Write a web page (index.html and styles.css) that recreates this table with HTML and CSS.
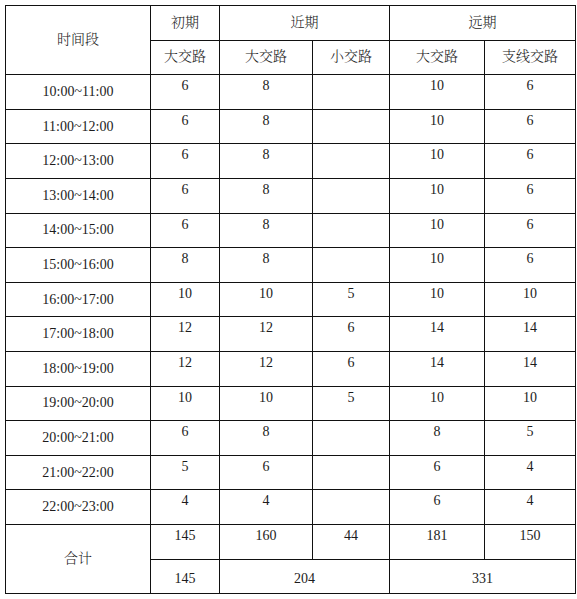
FILE: index.html
```html
<!DOCTYPE html>
<html lang="zh">
<head>
<meta charset="utf-8">
<link rel="stylesheet" href="styles.css">
</head>
<body>
<table class="plan">
  <colgroup>
    <col class="c-time"><col class="c-a"><col class="c-b"><col class="c-c"><col class="c-d"><col class="c-e">
  </colgroup>
  <tr class="head">
    <td rowspan="2" class="label">时间段</td>
    <td>初期</td>
    <td colspan="2">近期</td>
    <td colspan="2">远期</td>
  </tr>
  <tr class="head">
    <td>大交路</td><td>大交路</td><td>小交路</td><td>大交路</td><td>支线交路</td>
  </tr>
  <tr><td class="label">10:00~11:00</td><td>6</td><td>8</td><td></td><td>10</td><td>6</td></tr>
  <tr><td class="label">11:00~12:00</td><td>6</td><td>8</td><td></td><td>10</td><td>6</td></tr>
  <tr><td class="label">12:00~13:00</td><td>6</td><td>8</td><td></td><td>10</td><td>6</td></tr>
  <tr><td class="label">13:00~14:00</td><td>6</td><td>8</td><td></td><td>10</td><td>6</td></tr>
  <tr><td class="label">14:00~15:00</td><td>6</td><td>8</td><td></td><td>10</td><td>6</td></tr>
  <tr><td class="label">15:00~16:00</td><td>8</td><td>8</td><td></td><td>10</td><td>6</td></tr>
  <tr><td class="label">16:00~17:00</td><td>10</td><td>10</td><td>5</td><td>10</td><td>10</td></tr>
  <tr><td class="label">17:00~18:00</td><td>12</td><td>12</td><td>6</td><td>14</td><td>14</td></tr>
  <tr><td class="label">18:00~19:00</td><td>12</td><td>12</td><td>6</td><td>14</td><td>14</td></tr>
  <tr><td class="label">19:00~20:00</td><td>10</td><td>10</td><td>5</td><td>10</td><td>10</td></tr>
  <tr><td class="label">20:00~21:00</td><td>6</td><td>8</td><td></td><td>8</td><td>5</td></tr>
  <tr><td class="label">21:00~22:00</td><td>5</td><td>6</td><td></td><td>6</td><td>4</td></tr>
  <tr><td class="label">22:00~23:00</td><td>4</td><td>4</td><td></td><td>6</td><td>4</td></tr>
  <tr><td rowspan="2" class="label">合计</td><td>145</td><td>160</td><td>44</td><td>181</td><td>150</td></tr>
  <tr class="sum"><td>145</td><td colspan="2">204</td><td colspan="2">331</td></tr>
</table>
</body>
</html>
```
FILE: styles.css
```css
html, body {
  margin: 0;
  padding: 0;
  background: #fff;
}
body {
  padding: 5px 0 0 5px;
}
.plan {
  border-collapse: collapse;
  table-layout: fixed;
  width: 570px;
  font-family: "Liberation Serif", "Noto Serif CJK SC", "Noto Sans CJK SC", serif;
  font-size: 14px;
  font-weight: 300;
  color: #1c1c1c;
}
.c-time { width: 145px; }
.c-a { width: 69px; }
.c-b { width: 93px; }
.c-c { width: 77px; }
.c-d { width: 95px; }
.c-e { width: 91px; }
.plan tr {
  height: 34.6px;
}
.plan td {
  border: 1px solid #111;
  text-align: center;
  vertical-align: top;
  padding: 3px 0 0 0;
  line-height: 16px;
}
.plan td.label,
.plan tr.head td {
  vertical-align: middle;
  padding: 0;
}
.plan tr.sum td {
  vertical-align: middle;
  padding: 5px 0 0 0;
}
```
